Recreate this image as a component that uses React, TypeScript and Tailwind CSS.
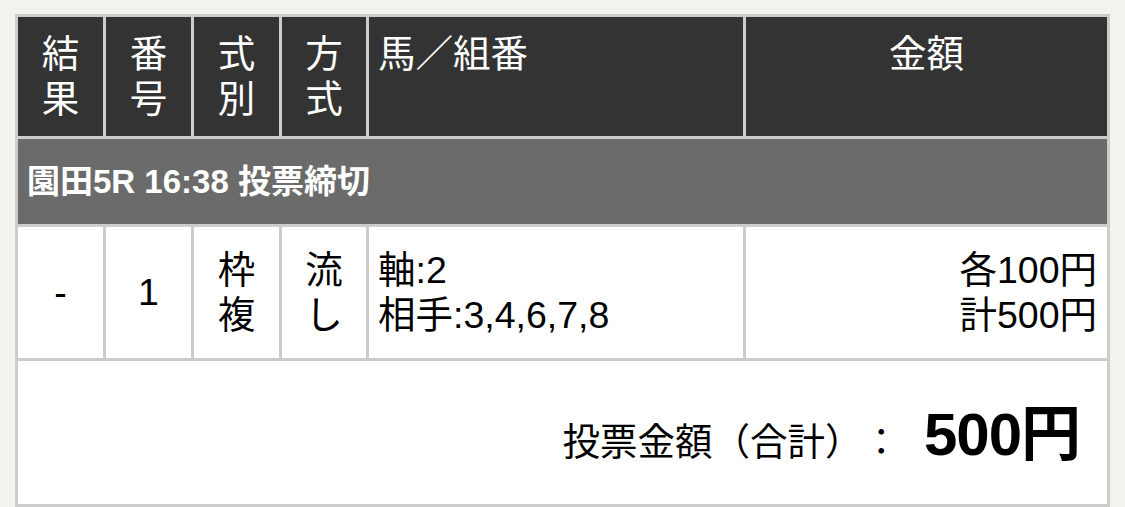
import React from "react";

export default function App() {
  return (
    <div className="h-[507px] w-[1125px] overflow-hidden bg-[#f2f2ef] pt-[14px] pl-[15px] font-['Liberation_Sans','Noto_Sans_CJK_JP',sans-serif] [text-spacing-trim:space-all]">
      <div className="grid w-[1095px] grid-cols-[85px_85px_85px_84px_374px_361px] gap-[3px] bg-[#cccccc] p-[3px]">
        {/* header */}
        {[
          ["結", "果"],
          ["番", "号"],
          ["式", "別"],
          ["方", "式"],
        ].map(([a, b], i) => (
          <div
            key={i}
            className="h-[119px] bg-[#333333] pt-[15px] text-center text-[37.5px] leading-[45px] text-white"
          >
            {a}
            <br />
            {b}
          </div>
        ))}
        <div className="h-[119px] bg-[#333333] pt-[15px] pl-[9px] text-[37.5px] leading-[45px] text-white">
          馬／組番
        </div>
        <div className="h-[119px] bg-[#333333] pt-[15px] text-center text-[37.5px] leading-[45px] text-white">
          金額
        </div>

        {/* race row */}
        <div className="col-span-6 flex h-[85px] items-center bg-[#6b6b6b] pl-[9px] text-[33px] font-bold text-white">
          園田5R 16:38 投票締切
        </div>

        {/* data row */}
        <div className="flex h-[131px] items-center justify-center bg-white text-[37.5px] leading-[45px] text-black">
          -
        </div>
        <div className="flex h-[131px] items-center justify-center bg-white text-[37.5px] leading-[45px] text-black">
          1
        </div>
        <div className="flex h-[131px] items-center justify-center bg-white text-center text-[37.5px] leading-[45px] text-black">
          <div>
            枠
            <br />
            複
          </div>
        </div>
        <div className="flex h-[131px] items-center justify-center bg-white text-center text-[37.5px] leading-[45px] text-black">
          <div>
            流
            <br />
            し
          </div>
        </div>
        <div className="flex h-[131px] items-center bg-white pl-[9px] text-[37.5px] leading-[45px] text-black">
          <div>
            <div>軸:2</div>
            <div>相手:3,4,6,7,8</div>
          </div>
        </div>
        <div className="flex h-[131px] items-center justify-end bg-white pr-[10px] text-right text-[37.5px] leading-[45px] text-black">
          <div>
            <div>各100円</div>
            <div>計500円</div>
          </div>
        </div>

        {/* total row */}
        <div className="col-span-6 flex h-[143px] items-center justify-end bg-white pt-[4px] pr-[27px] text-black">
          <div className="flex items-baseline">
            <span className="text-[37.5px] leading-[45px]">投票金額（合計）：</span>
            <span className="ml-[24px] text-[60px] leading-[60px] font-bold tracking-[-1px]">500円</span>
          </div>
        </div>
      </div>
    </div>
  );
}
